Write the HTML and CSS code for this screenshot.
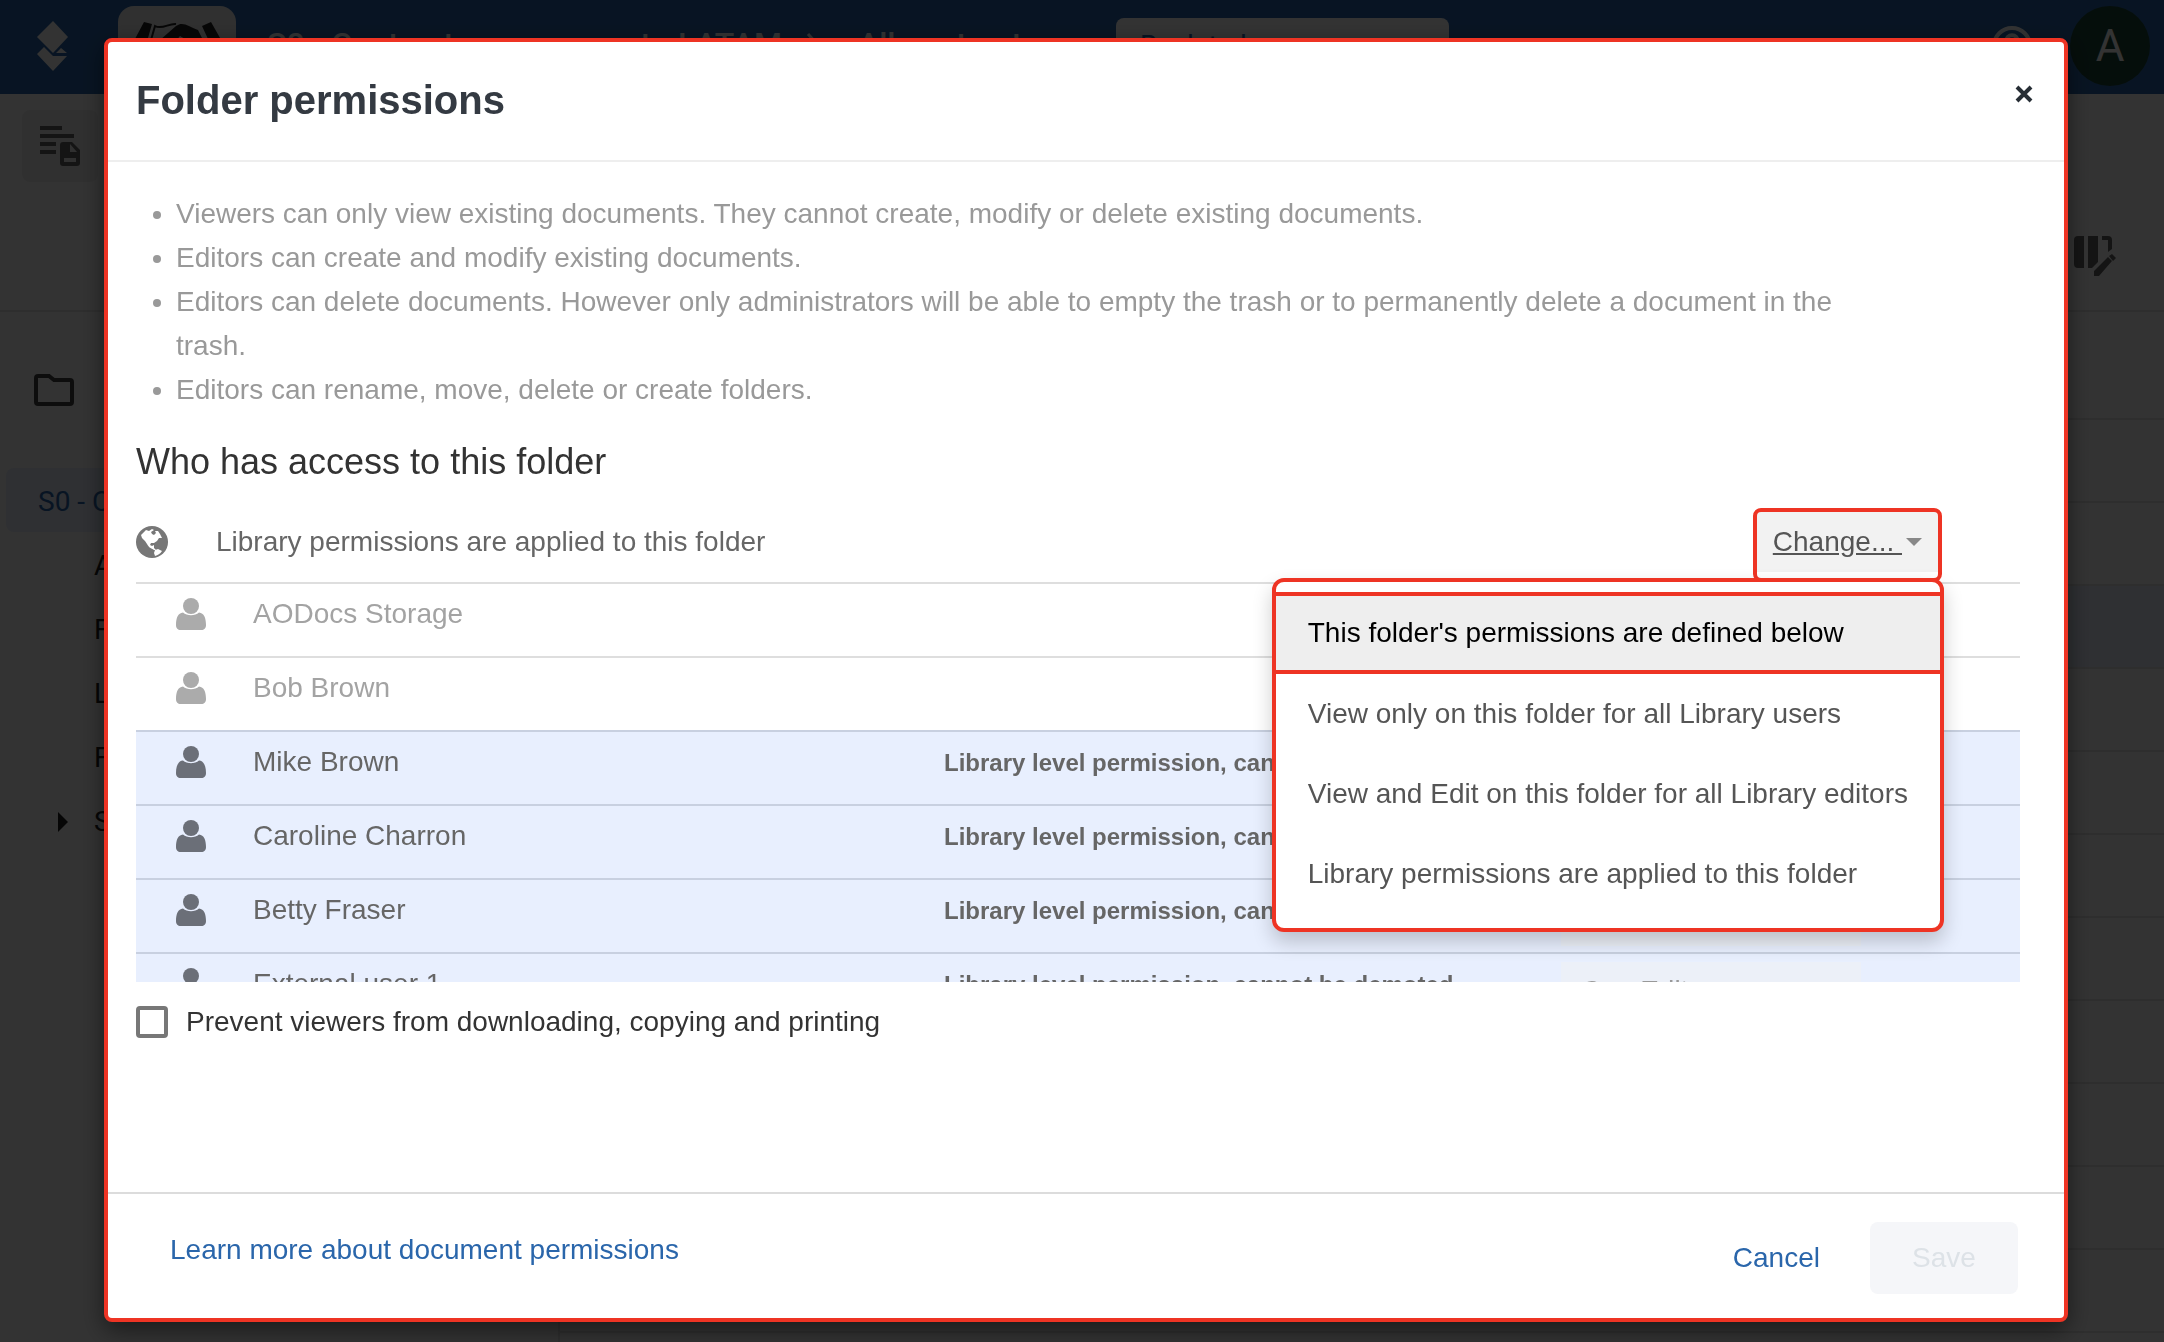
FILE: index.html
```html
<!DOCTYPE html>
<html lang="en">
<head>
  <meta charset="UTF-8">
  <title>Folder permissions</title>
  <link rel="stylesheet" href="styles.css">
</head>
<body>
  <svg class="sprite" aria-hidden="true">
    <symbol id="user" viewBox="0 0 30 32">
      <ellipse cx="15" cy="8" rx="8" ry="8"/>
      <path d="M7 14.500C11 18 19 18 23 14.500C28 15 30 20 30 27C30 30.500 28 32 25.500 32H4.500C2 32 0 30.500 0 27C0 20 2 15 7 14.500Z"/>
    </symbol>
  </svg>

  <div class="app">
    <header class="topbar">
      <svg class="topbar__logo" viewBox="0 0 34 50"><path d="M16 0L31 16L16 32L0 16ZM7 26L16 35H30L16 50L0 33ZM19 32L24 27L30 32Z"/></svg>
      <div class="topbar__tile">
        <svg viewBox="0 0 118 84">
          <path class="dark" d="M26 16L34 18L26 46H10ZM93 16L84 20L96 46H110Z"/>
          <path class="line" d="M33 34L37 20C44 24 51 17 58 18"/>
          <path class="dark" d="M42 34L58 20C65 15 70 20 80 24L86 36H72L62 30L50 44Z"/>
        </svg>
      </div>
      <div class="topbar__title">
        <span>S0 - Contract management - LATAM</span>
        <svg class="topbar__chevron" viewBox="0 0 12 22"><path d="M2 1L11 11L2 21"/></svg>
        <span>All contracts</span>
      </div>
      <input class="topbar__search" type="text" placeholder="Back to homepage" aria-label="Search">
      <svg class="topbar__help" viewBox="0 0 40 40"><circle cx="20" cy="20" r="18"/><path d="M14 16C14 7 26 7 26 16C26 20 20 20 20 25"/></svg>
      <div class="topbar__avatar">A</div>
    </header>

    <div class="toolbar">
      <button class="toolbar__view" aria-label="Views">
        <svg viewBox="0 0 40 40"><path d="M0 0H22V4H0ZM0 8H34V12H0ZM0 16H16V20H0ZM0 24H16V28H0ZM23 16H32L40 24V37Q40 40 37 40H23Q20 40 20 37V19Q20 16 23 16ZM30 18V26H37ZM24 32V36H36V32Z"/></svg>
      </button>
      <svg class="toolbar__columns" viewBox="0 0 42 40"><path d="M4 0H10V32H4Q0 32 0 28V4Q0 0 4 0ZM14 0H24V26L18 32H14ZM28 0H34Q38 0 38 4V13L34 16V4H28ZM20 35L34 21L38 25L25 40H20ZM35 20L38 18L42 22L39 25Z"/></svg>
    </div>

    <div class="content">
      <nav class="sidebar">
        <svg class="sidebar__folder" viewBox="0 0 40 32"><path d="M4 2H15L20 6H36Q38 6 38 8V28Q38 30 36 30H4Q2 30 2 28V4Q2 2 4 2Z"/></svg>
        <a class="sidebar__root" href="#">S0 - Contract</a>
        <a class="sidebar__item" href="#">A</a>
        <a class="sidebar__item" href="#">F</a>
        <a class="sidebar__item" href="#">L</a>
        <a class="sidebar__item" href="#">F</a>
        <a class="sidebar__item sidebar__item--parent" href="#">S</a>
      </nav>
      <div class="rows">
        <div class="rows__head"></div>
        <div class="rows__row"></div>
        <div class="rows__row"></div>
        <div class="rows__row rows__row--selected"></div>
        <div class="rows__row"></div>
        <div class="rows__row"></div>
        <div class="rows__row"></div>
        <div class="rows__row"></div>
        <div class="rows__row"></div>
        <div class="rows__row"></div>
        <div class="rows__row"></div>
        <div class="rows__row"></div>
        <div class="rows__row"></div>
      </div>
    </div>
  </div>

  <div class="overlay">
    <div class="modal" role="dialog" aria-labelledby="modal-title">
      <div class="modal__header">
        <h1 class="modal__title" id="modal-title">Folder permissions</h1>
        <button class="modal__close" aria-label="Close">
          <svg viewBox="0 0 18 18"><path d="M2 2L16 16M16 2L2 16"/></svg>
        </button>
      </div>

      <div class="modal__body">
        <ul class="notes">
          <li>Viewers can only view existing documents. They cannot create, modify or delete existing documents.</li>
          <li>Editors can create and modify existing documents.</li>
          <li>Editors can delete documents. However only administrators will be able to empty the trash or to permanently delete a document in the trash.</li>
          <li>Editors can rename, move, delete or create folders.</li>
        </ul>

        <h2 class="subtitle">Who has access to this folder</h2>

        <div class="scope">
          <svg class="scope__icon" viewBox="0 0 32 32">
            <circle cx="16" cy="16" r="16"/>
            <path d="M10 4L13 5L16 3L18 4L15 6L16 8L18 9L20 7L19 5L22 5L24 8L26 12L23 12L21 15L18 17L15 17L14 19L16 20L18 19L18 22L20 24L18 24C15 22 13 22 11 18L9 15L6 12L5 9Z"/>
            <path d="M19 24L22 23L26 25C24 28 22 29 19 30L18 27Z"/>
          </svg>
          <span class="scope__text">Library permissions are applied to this folder</span>
          <div class="change">
            <button class="change__button"><span class="change__label">Change...&nbsp;</span><span class="change__caret"></span></button>
            <div class="menu" role="menu">
              <button class="menu__item menu__item--active" role="menuitem">This folder's permissions are defined below</button>
              <button class="menu__item" role="menuitem">View only on this folder for all Library users</button>
              <button class="menu__item" role="menuitem">View and Edit on this folder for all Library editors</button>
              <button class="menu__item" role="menuitem">Library permissions are applied to this folder</button>
            </div>
          </div>
        </div>

        <div class="users">
          <table class="users__table">
            <colgroup>
              <col class="col-icon">
              <col>
              <col class="col-level">
              <col class="col-role">
            </colgroup>
            <tr class="muted">
              <td><svg class="users__icon"><use href="#user"/></svg></td>
              <td>AODocs Storage</td>
              <td></td>
              <td></td>
            </tr>
            <tr class="muted">
              <td><svg class="users__icon"><use href="#user"/></svg></td>
              <td>Bob Brown</td>
              <td></td>
              <td></td>
            </tr>
            <tr class="locked">
              <td><svg class="users__icon"><use href="#user"/></svg></td>
              <td>Mike Brown</td>
              <td class="level">Library level permission, cannot be demoted</td>
              <td><select class="role" aria-label="Role of Mike Brown" disabled><option>Can Edit</option></select></td>
            </tr>
            <tr class="locked">
              <td><svg class="users__icon"><use href="#user"/></svg></td>
              <td>Caroline Charron</td>
              <td class="level">Library level permission, cannot be demoted</td>
              <td><select class="role" aria-label="Role of Caroline Charron" disabled><option>Can Edit</option></select></td>
            </tr>
            <tr class="locked">
              <td><svg class="users__icon"><use href="#user"/></svg></td>
              <td>Betty Fraser</td>
              <td class="level">Library level permission, cannot be demoted</td>
              <td><select class="role" aria-label="Role of Betty Fraser" disabled><option>Can Edit</option></select></td>
            </tr>
            <tr class="locked">
              <td><svg class="users__icon"><use href="#user"/></svg></td>
              <td>External user 1</td>
              <td class="level">Library level permission, cannot be demoted</td>
              <td><select class="role" aria-label="Role of External user 1" disabled><option>Can Edit</option></select></td>
            </tr>
          </table>
        </div>

        <label class="prevent">
          <input class="prevent__box" type="checkbox">
          Prevent viewers from downloading, copying and printing
        </label>
      </div>

      <div class="modal__footer">
        <a class="modal__link" href="#">Learn more about document permissions</a>
        <button class="btn btn--cancel">Cancel</button>
        <button class="btn btn--save" disabled>Save</button>
      </div>
    </div>
  </div>
</body>
</html>
```
FILE: styles.css
```css
*, *:before, *:after {
  box-sizing: border-box;
}

body {
  margin: 0;
  font-family: "Liberation Sans", Arial, sans-serif;
  font-size: 28px;
  line-height: 44px;
  color: #333;
  overflow: hidden;
}

button, input, select {
  font: inherit;
}

button {
  border: 0;
  background: none;
  padding: 0;
  cursor: pointer;
}

.sprite {
  position: absolute;
  width: 0;
  height: 0;
}

/* page behind the dialog */
.app {
  display: flex;
  flex-direction: column;
  height: 100vh;
  background: #fff;
  font-family: Roboto, sans-serif;
}

.topbar {
  display: flex;
  align-items: flex-start;
  height: 94px;
  padding: 6px 14px 0 37px;
  background: #2b67ad;
  color: #fff;
}

.topbar__logo {
  width: 34px;
  height: 50px;
  margin: 15px 47px 0 0;
  fill: #fff;
}

.topbar__tile {
  width: 118px;
  height: 84px;
  margin-right: 31px;
  border-radius: 16px;
  background: #eee;
}

.topbar__tile .dark {
  fill: #222;
}

.topbar__tile .line {
  fill: none;
  stroke: #222;
  stroke-width: 2;
}

.topbar__title {
  display: flex;
  align-items: center;
  width: 849px;
  padding-top: 16px;
  font-size: 32px;
  font-weight: 500;
  white-space: nowrap;
}

.topbar__chevron {
  width: 12px;
  height: 22px;
  margin: 0 40px 0 24px;
  fill: none;
  stroke: #fff;
  stroke-width: 3;
}

.topbar__search {
  width: 333px;
  height: 54px;
  margin: 12px auto 0 0;
  padding: 0 24px;
  border: 0;
  border-radius: 8px;
  background: #fff;
}

.topbar__search::placeholder {
  color: #2b67ad;
}

.topbar__help {
  width: 40px;
  height: 40px;
  margin: 20px 38px 0 0;
  fill: none;
  stroke: #fff;
  stroke-width: 4;
}

.topbar__avatar {
  width: 80px;
  height: 80px;
  border-radius: 50%;
  background: #1d4638;
  font-size: 44px;
  line-height: 80px;
  text-align: center;
}

.toolbar {
  display: flex;
  justify-content: space-between;
  align-items: flex-start;
  height: 218px;
  padding: 16px 48px 0 22px;
  border-bottom: 2px solid #e6e6e6;
}

.toolbar__view {
  width: 76px;
  height: 72px;
  border-radius: 8px;
  background: #f0f0f0;
}

.toolbar__view svg {
  display: block;
  width: 40px;
  height: 40px;
  margin: 0 auto;
  fill: #666;
  fill-rule: evenodd;
}

.toolbar__columns {
  width: 42px;
  height: 40px;
  margin-top: 126px;
  fill: #666;
}

.content {
  display: flex;
  flex: 1;
  min-height: 0;
}

.sidebar {
  display: flex;
  flex-direction: column;
  width: 560px;
  border-right: 2px solid #e6e6e6;
}

.sidebar__folder {
  width: 40px;
  height: 32px;
  margin: 62px 34px;
  fill: none;
  stroke: #444;
  stroke-width: 4;
}

.sidebar a {
  height: 64px;
  line-height: 68px;
  text-decoration: none;
}

.sidebar__root {
  margin: 0 6px;
  padding-left: 32px;
  border-radius: 8px;
  background: #e8effe;
  color: #2b67ad;
}

.sidebar__item {
  display: flex;
  align-items: flex-start;
  padding-left: 94px;
  color: #222;
}

.sidebar__item--parent {
  padding-left: 58px;
}

.sidebar__item--parent:before {
  content: "";
  margin: 24px 26px 0 0;
  border: 10px solid transparent;
  border-left-color: #222;
  border-right: 0;
}

.rows {
  flex: 1;
  overflow: hidden;
}

.rows__head {
  height: 108px;
  border-bottom: 2px solid #e6e6e6;
}

.rows__row {
  height: 83px;
  border-bottom: 2px solid #e6e6e6;
}

.rows__row--selected {
  background: #e8effe;
}

/* dialog */
.overlay {
  position: fixed;
  inset: 0;
  display: flex;
  padding: 38px 96px 20px 104px;
  background: rgba(0, 0, 0, 0.8);
}

.modal {
  flex: 1;
  display: flex;
  flex-direction: column;
  min-width: 0;
  border: 4px solid #ee3424;
  border-radius: 8px;
  background: #fff;
  box-shadow: 0 8px 24px rgba(0, 0, 0, 0.5);
}

.modal__header {
  display: flex;
  justify-content: space-between;
  align-items: flex-start;
  padding: 34px 30px 36px 28px;
  border-bottom: 2px solid #eee;
}

.modal__title {
  margin: 0;
  font-size: 40px;
  line-height: 48px;
  color: #343a42;
}

.modal__close {
  width: 20px;
  height: 36px;
}

.modal__close svg {
  display: block;
  width: 18px;
  height: 18px;
  margin: 0 auto;
  stroke: #272e35;
  stroke-width: 4;
}

.modal__body {
  flex: 1;
  padding: 30px 44px 0 28px;
}

.notes {
  margin: 0;
  padding: 0 150px 0 40px;
  color: #999;
}

.subtitle {
  margin: 28px 0 24px;
  font-size: 36px;
  font-weight: normal;
  line-height: 44px;
}

.scope {
  display: flex;
  align-items: flex-start;
  color: #666;
  padding-right: 78px;
}

.scope__icon {
  width: 32px;
  height: 32px;
  margin: 18px 48px 0 0;
  fill: #777;
}

.scope__icon path {
  fill: #fff;
}

.scope__text {
  flex: 1;
  line-height: 68px;
}

.change {
  position: relative;
}

.change__button {
  display: flex;
  align-items: center;
  height: 74px;
  padding: 0 16px 6px;
  border: 4px solid #ee3424;
  border-radius: 8px;
  background: linear-gradient(#f2f2f2 60px, #fff 60px);
  color: #555;
}

.change__label {
  text-decoration: underline;
}

.change__caret {
  margin-left: 4px;
  border: 8px solid transparent;
  border-top-color: #888;
  border-bottom: 0;
}

.menu {
  position: absolute;
  top: 70px;
  right: -2px;
  z-index: 1;
  display: flex;
  flex-direction: column;
  padding: 10px 0 14px;
  border: 4px solid #ee3424;
  border-radius: 12px;
  background: #fff;
  box-shadow: 0 10px 20px rgba(0, 0, 0, 0.2);
}

.menu__item {
  height: 80px;
  padding: 0 32px;
  color: #555;
  text-align: left;
  white-space: nowrap;
}

.menu__item--active {
  height: 82px;
  border: solid #ee3424;
  border-width: 4px 0;
  background: #eee;
  color: #000;
}

.users {
  height: 400px;
  overflow: hidden;
}

.users__table {
  width: 100%;
  table-layout: fixed;
  border-collapse: collapse;
  color: #666;
}

.users__table tr {
  height: 74px;
  border-top: 2px solid #dedede;
}

.users__table td {
  padding: 8px 0 0;
  vertical-align: top;
}

.users__icon {
  display: block;
  width: 30px;
  height: 32px;
  margin: 6px 0 0 40px;
  fill: #6b6f78;
}

.users__table .muted {
  color: #a3a3a3;
}

.muted .users__icon {
  fill: #ababab;
}

.users__table .locked {
  border-color: #c8d0e0;
  background: #e8effe;
}

.users__table .level {
  font-size: 24px;
  font-weight: bold;
  line-height: 46px;
}

.col-icon {
  width: 117px;
}

.col-level {
  width: 617px;
}

.col-role {
  width: 459px;
}

.role {
  display: block;
  width: 300px;
  height: 58px;
  padding: 0 20px;
  appearance: none;
  border: 0;
  background: #ecf0f8;
  color: #999;
  opacity: 1;
}

.prevent {
  display: flex;
  align-items: center;
  gap: 18px;
  margin-top: 18px;
}

.prevent__box {
  width: 32px;
  height: 32px;
  margin: 0;
  appearance: none;
  border: 4px solid #777;
  border-radius: 4px;
}

.modal__footer {
  display: flex;
  align-items: center;
  gap: 50px;
  padding: 28px 46px 24px 62px;
  border-top: 2px solid #dcdcdc;
}

.modal__link {
  margin: 0 auto 16px 0;
  color: #2a66ab;
  text-decoration: none;
}

.btn {
  height: 72px;
  border-radius: 8px;
}

.btn--cancel {
  color: #2a66ab;
}

.btn--save {
  width: 148px;
  background: #f5f6f9;
  color: #dde2e7;
}
```
